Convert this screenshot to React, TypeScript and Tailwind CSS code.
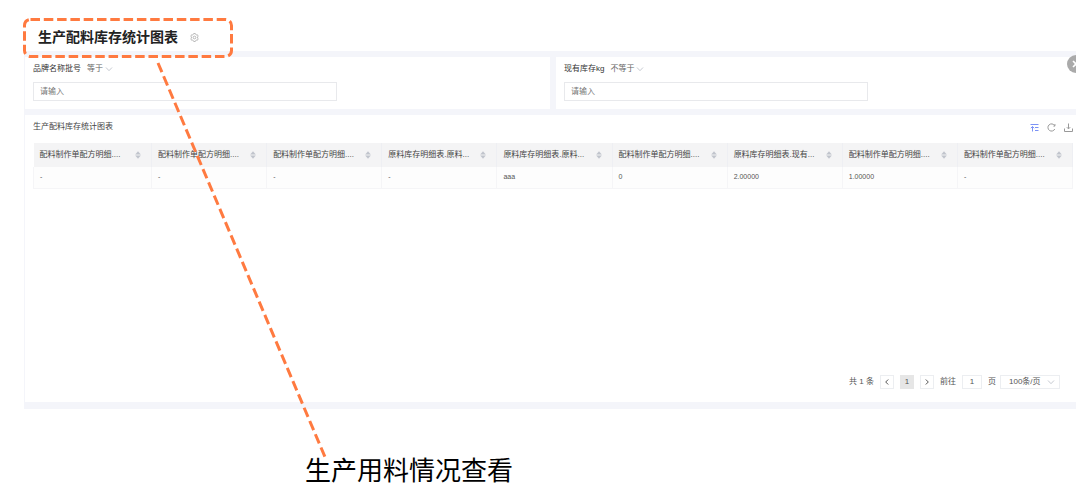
import { type FC, type ReactNode } from 'react'

const columns = [
  { title: '配料制作单配方明细....', value: '-' },
  { title: '配料制作单配方明细....', value: '-' },
  { title: '配料制作单配方明细....', value: '-' },
  { title: '原料库存明细表.原料...', value: '-' },
  { title: '原料库存明细表.原料...', value: 'aaa' },
  { title: '配料制作单配方明细....', value: '0' },
  { title: '原料库存明细表.现有...', value: '2.00000' },
  { title: '配料制作单配方明细....', value: '1.00000' },
  { title: '配料制作单配方明细....', value: '-' },
]

const Chevron: FC<{ className?: string }> = ({ className }) => (
  <svg viewBox="0 0 8 8" className={`size-2 shrink-0 ${className ?? ''}`} fill="none" stroke="#c0c4cc" strokeWidth="0.9">
    <path d="M1 2.5 4 5.7 7 2.5" />
  </svg>
)

const GearIcon = () => (
  <svg viewBox="0 0 10 10" className="size-[9px]" fill="none" stroke="#aaa" strokeWidth="0.9">
    <path d="M3.7 1.6 4.1.6h1.8l.4 1 .8.5 1.1-.2.9 1.6-.7.8v1.4l.7.8-.9 1.6-1.1-.2-.8.5-.4 1H4.1l-.4-1-.8-.5-1.1.2-.9-1.6.7-.8V4.3l-.7-.8.9-1.6 1.1.2z" />
    <circle cx="5" cy="5" r="1.5" />
  </svg>
)

const SortIcon = () => (
  <svg viewBox="0 0 6 8" className="h-2 w-[6px] shrink-0" fill="#c0c4cc">
    <path d="M3 .3 5.8 3.4H.2z" />
    <path d="M3 7.7.2 4.6h5.6z" />
  </svg>
)

const Filter: FC<{ id: string; label: string; operator: string }> = ({ id, label, operator }) => (
  <div className="bg-white px-2 pt-1 pb-2">
    <div className="flex h-[15px] items-center text-[8px]">
      <label htmlFor={id} className="text-[#333]">{label}</label>
      <button type="button" className="ml-[6px] flex items-center gap-[2px] text-[#666]">
        {operator}
        <Chevron />
      </button>
    </div>
    <input
      id={id}
      type="text"
      placeholder="请输入"
      className="mt-[6px] block h-[19px] w-[304px] max-w-full border border-[#e8e9ec] px-[6px] text-[8px] text-[#666] placeholder:text-[#777]"
    />
  </div>
)

const ToolButton: FC<{ label: string; children: ReactNode }> = ({ label, children }) => (
  <button type="button" aria-label={label} className="size-[9px]">
    {children}
  </button>
)

const Pagination = () => (
  <nav className="flex items-center justify-end pr-[13px] text-[8px] text-[#555]">
    <span>共 1 条</span>
    <button type="button" aria-label="上一页" className="ml-[6px] flex h-[14px] w-[14px] items-center justify-center border border-[#eceef1]">
      <svg viewBox="0 0 8 8" className="size-2" fill="none" stroke="#555"><path d="M5.2 1.5 2.7 4l2.5 2.5" /></svg>
    </button>
    <button type="button" className="ml-[6px] h-[14px] w-[14px] bg-[#e6e6e6]">1</button>
    <button type="button" aria-label="下一页" className="ml-[6px] flex h-[14px] w-[14px] items-center justify-center border border-[#eceef1]">
      <svg viewBox="0 0 8 8" className="size-2" fill="none" stroke="#555"><path d="M2.8 1.5 5.3 4 2.8 6.5" /></svg>
    </button>
    <label htmlFor="page" className="ml-[6px]">前往</label>
    <input id="page" type="text" defaultValue="1" className="ml-[6px] h-[14px] w-5 border border-[#eceef1] text-center" />
    <span className="ml-[6px]">页</span>
    <div className="ml-1 flex h-[14px] w-[60px] items-center border border-[#eceef1] pr-1 pl-2">
      <select aria-label="每页条数" className="min-w-0 flex-1 appearance-none">
        <option>100条/页</option>
      </select>
      <Chevron />
    </div>
  </nav>
)

const Callout = () => (
  <svg width="340" height="470" className="pointer-events-none absolute top-0 left-0" fill="none" stroke="#ff7a40" strokeWidth="3">
    <rect x="24.5" y="19.5" width="207" height="37" rx="6" strokeDasharray="9.5 3.8" />
    <path d="M158 63 325 457" strokeDasharray="10 4.4" />
  </svg>
)

export default function App() {
  return (
    <main className="relative bg-white pr-1 pl-6 font-['Liberation_Sans','Noto_Sans_CJK_SC',sans-serif]">
      <header className="flex h-[51px] items-end gap-3 pb-[3px] pl-[14px]">
        <h1 className="text-[14px] leading-[21px] font-bold text-[#222]">生产配料库存统计图表</h1>
        <button type="button" aria-label="设置" className="mb-[6px]"><GearIcon /></button>
      </header>

      <div className="relative overflow-hidden bg-[#f4f5fa] pt-[6px] pb-[7px] pl-px">
        {/* Filters */}
        <section className="grid grid-cols-[525fr_520fr] gap-[6px]">
          <Filter id="batch" label="品牌名称批号" operator="等于" />
          <Filter id="stock" label="现有库存kg" operator="不等于" />
        </section>

        <button type="button" aria-label="关闭" className="absolute top-[4px] -right-[9px] flex size-[18px] items-center justify-center rounded-full bg-[#aaa]">
          <svg viewBox="0 0 10 10" className="size-[10px]" fill="none" stroke="#fff" strokeWidth="1.6"><path d="m2 2 6 6M8 2 2 8" /></svg>
        </button>

        {/* Stock table */}
        <section className="mt-[6px] bg-white pr-[3px] pb-[13px] pl-2">
          <div className="flex h-7 items-center justify-between pb-1">
            <h2 className="text-[8px] text-[#444]">生产配料库存统计图表</h2>
            <div className="flex gap-2">
              <ToolButton label="行高">
                <svg viewBox="0 0 9 9" fill="none" stroke="#7b92f5"><path d="M.5 1.5h8M5 4.5h3.5M5 7.5h3.5M2.5 3.5v5M.8 5.2l1.7-1.7 1.7 1.7" /></svg>
              </ToolButton>
              <ToolButton label="刷新">
                <svg viewBox="0 0 9 9" fill="none" stroke="#999"><path d="M7.6 2.6A3.6 3.6 0 1 0 7.8 6M7.9 1v2.1H6.4" /></svg>
              </ToolButton>
              <ToolButton label="下载">
                <svg viewBox="0 0 9 9" fill="none" stroke="#999"><path d="M.5 5.5v3h8v-3M4.5.5v5.2M2.8 4.2l1.7 1.7 1.7-1.7" /></svg>
              </ToolButton>
            </div>
          </div>

          <table className="w-full table-fixed border-collapse text-left text-[8px]">
            <thead>
              <tr className="h-6 bg-[#f4f4f5]">
                {columns.map((col, i) => (
                  <th key={i} className="border-r border-[#eeeff3] pr-[10px] pl-[6px] font-normal text-[#444] first:w-[118px]">
                    <div className="flex items-center justify-between whitespace-nowrap">
                      {col.title}
                      <SortIcon />
                    </div>
                  </th>
                ))}
              </tr>
            </thead>
            <tbody>
              <tr className="h-[21px] bg-[#fdfdfd]">
                {columns.map((col, i) => (
                  <td key={i} className="border border-t-0 border-[#f5f5f7] pl-[6px] text-[7px] text-[#555]">{col.value}</td>
                ))}
              </tr>
            </tbody>
          </table>

          <div className="pt-[186px]">
            <Pagination />
          </div>
        </section>
      </div>

      <p className="mt-11 pl-[281px] text-[26px] leading-9 text-black">生产用料情况查看</p>

      <Callout />
    </main>
  )
}
